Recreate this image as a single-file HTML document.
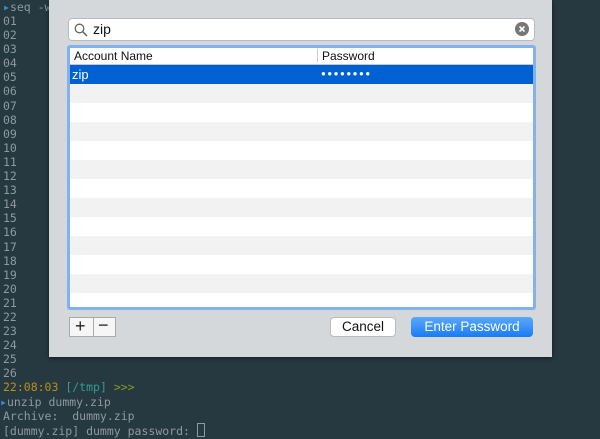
<!DOCTYPE html>
<html><head><style>
body{margin:0;width:600px;height:439px;background:#263840;position:relative;overflow:hidden;font-family:"DejaVu Sans Mono","Liberation Mono",monospace}
.t{position:absolute;left:3px;font-size:11.5px;color:#8e9a9f;line-height:14.1px;white-space:pre}
.dlg{position:absolute;left:49px;top:0;width:503px;height:357px;background:#d4d8da;box-shadow:0 1px 4px rgba(0,0,0,.5);font-family:"Liberation Sans",sans-serif}
.search{position:absolute;left:19px;top:18px;width:465px;height:21px;background:#fff;border:1px solid #b9bcbe;border-radius:4px}
.tbl{position:absolute;left:18px;top:45px;width:469px;height:265px;border:3px solid #82b2ee;border-radius:3px;box-sizing:border-box;background:#fff;overflow:hidden}
.hd{height:16px;border-bottom:1px solid #c8c8c8;font-size:12px;color:#111;position:relative}
.row{height:19px;position:relative}
.g{background:#f2f2f2}
.btn{position:absolute;top:317px;height:20px;border-radius:4px;font-size:13px;text-align:center;line-height:20px}
</style></head><body>
<div class="t" style="top:0px"><span style="color:#3b8de0">▸</span>seq -w 2</div>
<div class="t" style="top:14px">01
02
03
04
05
06
07
08
09
10
11
12
13
14
15
16
17
18
19
20
21
22
23
24
25
26
<span style="color:#b8901f">22:08:03</span> <span style="color:#2f9c95">[/tmp]</span> <span style="color:#8a9a1e">&gt;&gt;&gt;</span>
<span style="color:#3b8de0;margin-left:-3px">▸</span>unzip dummy.zip
Archive:  dummy.zip
[dummy.zip] dummy password: <span style="display:inline-block;width:6px;height:12px;border:1px solid #8e9a9f;vertical-align:-2px"></span></div>
<div class="dlg">
 <div class="search">
  <svg width="14" height="14" style="position:absolute;left:5px;top:4px"><circle cx="5.5" cy="5.5" r="4.3" fill="none" stroke="#666" stroke-width="1.3"/><line x1="8.7" y1="8.7" x2="13" y2="13" stroke="#666" stroke-width="1.5"/></svg>
  <span style="position:absolute;left:24px;top:2px;font-size:14px;color:#111">zip</span>
  <svg width="14" height="14" style="position:absolute;left:446px;top:3px"><circle cx="7" cy="7" r="7" fill="#777"/><path d="M4.5 4.5L9.5 9.5M9.5 4.5L4.5 9.5" stroke="#fff" stroke-width="1.6"/></svg>
 </div>
 <div class="tbl">
  <div class="hd"><span style="position:absolute;left:4px;top:1px">Account Name</span><span style="position:absolute;left:247px;top:1px;height:13px;border-left:1px solid #ccc"></span><span style="position:absolute;left:252px;top:1px">Password</span></div>
  <div class="row" style="background:#0061d3;color:#fff;font-size:13px"><span style="position:absolute;left:2px;top:2px">zip</span><span style="position:absolute;left:251px;top:4px;font-size:8px;letter-spacing:1.5px">●●●●●●●●</span></div>
  <div class="row g"></div><div class="row"></div><div class="row g"></div><div class="row"></div><div class="row g"></div><div class="row"></div><div class="row g"></div><div class="row"></div><div class="row g"></div><div class="row"></div><div class="row g"></div><div class="row"></div>
 </div>
 <div style="position:absolute;left:20px;top:317px;width:47px;height:20px;border:1px solid #aaa;background:#f6f6f6;box-sizing:border-box">
  <div style="position:absolute;left:23px;top:0;height:18px;border-left:1px solid #aaa"></div>
  <span style="position:absolute;left:5px;top:-2px;font-size:18px;color:#222">+</span>
  <span style="position:absolute;left:28px;top:-3px;font-size:18px;color:#222">−</span>
 </div>
 <div class="btn" style="left:281px;width:66px;background:#fff;border:1px solid #bbb;box-sizing:border-box;line-height:18px;color:#111;font-size:13.5px">Cancel</div>
 <div class="btn" style="left:362px;width:122px;background:linear-gradient(#5aa8fc,#1a7bf5);color:#fff;font-size:13.5px">Enter Password</div>
</div>
</body></html>
